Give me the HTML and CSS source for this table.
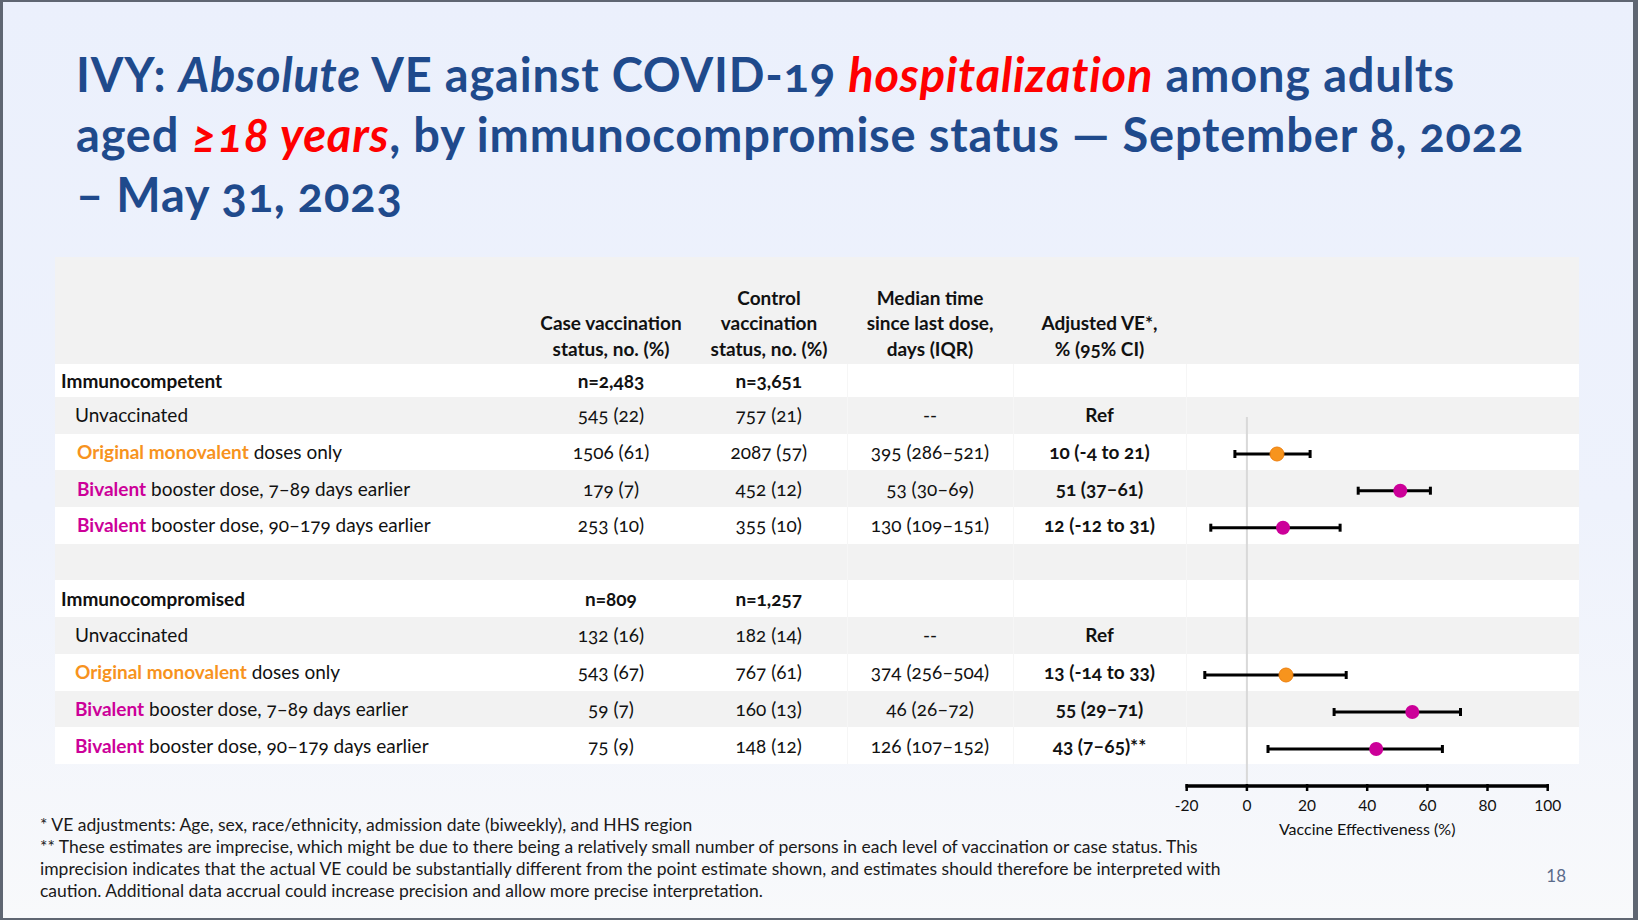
FILE: index.html
```html
<!DOCTYPE html>
<html lang="en">
<head>
<meta charset="utf-8">
<title>IVY: Absolute VE against COVID-19 hospitalization</title>
<link rel="stylesheet" href="styles.css">
</head>
<body>
<div class="slide">
  <h1 class="title">IVY: <em>Absolute</em> VE against COVID-19 <em class="hl">hospitalization</em> among adults<br>aged <em class="hl">≥18 years</em>, by immunocompromise status — September 8, 2022<br>– May 31, 2023</h1>

  <div class="table-wrap">
    <table class="ve">
      <colgroup>
        <col class="c-label"><col class="c-case"><col class="c-ctrl"><col class="c-med"><col class="c-adj"><col class="c-chart">
      </colgroup>
      <thead>
        <tr>
          <th></th>
          <th>Case vaccination<br>status, no. (%)</th>
          <th>Control<br>vaccination<br>status, no. (%)</th>
          <th>Median time<br>since last dose,<br>days (IQR)</th>
          <th>Adjusted VE*,<br>% (95% CI)</th>
          <th></th>
        </tr>
      </thead>
      <tbody>
        <tr class="group short">
          <td class="label">Immunocompetent</td><td>n=2,483</td><td>n=3,651</td><td class="sep"></td><td class="sep"></td><td class="sep"></td>
        </tr>
        <tr>
          <td class="label sub">Unvaccinated</td><td>545 (22)</td><td>757 (21)</td><td class="sep">--</td><td class="sep bold">Ref</td><td class="sep"></td>
        </tr>
        <tr>
          <td class="label sub wide"><span class="orig">Original monovalent</span> doses only</td><td>1506 (61)</td><td>2087 (57)</td><td class="sep">395 (286–521)</td><td class="sep bold">10 (-4 to 21)</td><td class="sep"></td>
        </tr>
        <tr>
          <td class="label sub wide"><span class="biv">Bivalent</span> booster dose, 7–89 days earlier</td><td>179 (7)</td><td>452 (12)</td><td class="sep">53 (30–69)</td><td class="sep bold">51 (37–61)</td><td class="sep"></td>
        </tr>
        <tr>
          <td class="label sub wide"><span class="biv">Bivalent</span> booster dose, 90–179 days earlier</td><td>253 (10)</td><td>355 (10)</td><td class="sep">130 (109–151)</td><td class="sep bold">12 (-12 to 31)</td><td class="sep"></td>
        </tr>
        <tr class="blank">
          <td></td><td></td><td></td><td class="sep"></td><td class="sep"></td><td class="sep"></td>
        </tr>
        <tr class="group">
          <td class="label">Immunocompromised</td><td>n=809</td><td>n=1,257</td><td class="sep"></td><td class="sep"></td><td class="sep"></td>
        </tr>
        <tr>
          <td class="label sub">Unvaccinated</td><td>132 (16)</td><td>182 (14)</td><td class="sep">--</td><td class="sep bold">Ref</td><td class="sep"></td>
        </tr>
        <tr>
          <td class="label sub"><span class="orig">Original monovalent</span> doses only</td><td>543 (67)</td><td>767 (61)</td><td class="sep">374 (256–504)</td><td class="sep bold">13 (-14 to 33)</td><td class="sep"></td>
        </tr>
        <tr>
          <td class="label sub"><span class="biv">Bivalent</span> booster dose, 7–89 days earlier</td><td>59 (7)</td><td>160 (13)</td><td class="sep">46 (26–72)</td><td class="sep bold">55 (29–71)</td><td class="sep"></td>
        </tr>
        <tr>
          <td class="label sub"><span class="biv">Bivalent</span> booster dose, 90–179 days earlier</td><td>75 (9)</td><td>148 (12)</td><td class="sep">126 (107–152)</td><td class="sep bold">43 (7–65)**</td><td class="sep"></td>
        </tr>
      </tbody>
    </table>

    <svg class="forest" width="430" height="450" viewBox="0 0 430 450">
      <line class="zero" x1="96.9" y1="17" x2="96.9" y2="386"/>
      <g class="ci">
        <line x1="84.9" y1="54" x2="160.1" y2="54"/><line x1="84.9" y1="50" x2="84.9" y2="58"/><line x1="160.1" y1="50" x2="160.1" y2="58"/>
        <line x1="208.2" y1="90.7" x2="280.4" y2="90.7"/><line x1="208.2" y1="86.7" x2="208.2" y2="94.7"/><line x1="280.4" y1="86.7" x2="280.4" y2="94.7"/>
        <line x1="60.8" y1="127.7" x2="190.1" y2="127.7"/><line x1="60.8" y1="123.7" x2="60.8" y2="131.7"/><line x1="190.1" y1="123.7" x2="190.1" y2="131.7"/>
        <line x1="54.8" y1="275" x2="196.2" y2="275"/><line x1="54.8" y1="271" x2="54.8" y2="279"/><line x1="196.2" y1="271" x2="196.2" y2="279"/>
        <line x1="184.1" y1="312" x2="310.5" y2="312"/><line x1="184.1" y1="308" x2="184.1" y2="316"/><line x1="310.5" y1="308" x2="310.5" y2="316"/>
        <line x1="118" y1="349" x2="292.4" y2="349"/><line x1="118" y1="345" x2="118" y2="353"/><line x1="292.4" y1="345" x2="292.4" y2="353"/>
      </g>
      <circle class="dot-orig" cx="127" cy="54" r="7"/>
      <circle class="dot-biv" cx="250.3" cy="90.7" r="7"/>
      <circle class="dot-biv" cx="133" cy="127.7" r="7"/>
      <circle class="dot-orig" cx="136" cy="275" r="7"/>
      <circle class="dot-biv" cx="262.3" cy="312" r="7"/>
      <circle class="dot-biv" cx="226.2" cy="349" r="7"/>
      <g class="axis">
        <line class="axis-line" x1="35.5" y1="386" x2="398.9" y2="386"/>
        <line x1="36.7" y1="384" x2="36.7" y2="391"/>
        <line x1="96.9" y1="384" x2="96.9" y2="391"/>
        <line x1="157.1" y1="384" x2="157.1" y2="391"/>
        <line x1="217.2" y1="384" x2="217.2" y2="391"/>
        <line x1="277.4" y1="384" x2="277.4" y2="391"/>
        <line x1="337.5" y1="384" x2="337.5" y2="391"/>
        <line x1="397.7" y1="384" x2="397.7" y2="391"/>
      </g>
      <g class="ticks">
        <text x="36.7" y="411">-20</text>
        <text x="96.9" y="411">0</text>
        <text x="157.1" y="411">20</text>
        <text x="217.2" y="411">40</text>
        <text x="277.4" y="411">60</text>
        <text x="337.5" y="411">80</text>
        <text x="397.7" y="411">100</text>
      </g>
      <text class="axis-title" x="217.2" y="435">Vaccine Effectiveness (%)</text>
    </svg>
  </div>

  <div class="footer">
    <p class="notes">* VE adjustments: Age, sex, race/ethnicity, admission date (biweekly), and HHS region<br>** These estimates are imprecise, which might be due to there being a relatively small number of persons in each level of vaccination or case status. This<br>imprecision indicates that the actual VE could be substantially different from the point estimate shown, and estimates should therefore be interpreted with<br>caution. Additional data accrual could increase precision and allow more precise interpretation.</p>
    <span class="page-num">18</span>
  </div>
</div>
</body>
</html>
```

FILE: styles.css
```css
html, body {
  margin: 0;
  padding: 0;
}

body {
  width: 1638px;
  height: 920px;
  overflow: hidden;
  font-family: Lato, "Open Sans", "Noto Sans", sans-serif;
  color: #111;
}

.slide {
  box-sizing: border-box;
  width: 1638px;
  height: 920px;
  border-style: solid;
  border-color: #5f6672;
  border-width: 2px 5px 2px 3px;
  background: linear-gradient(180deg, #ebf0fc 0%, #eef2fc 55%, #f8f9fb 100%);
  display: flex;
  flex-direction: column;
}

/* Title */
.title {
  margin: 42px 0 0 73px;
  font-size: 47px;
  line-height: 60px;
  letter-spacing: 0.8px;
  font-weight: 700;
  color: #1f4a8c;
  font-variant-numeric: oldstyle-nums;
}

.title em {
  font-style: italic;
}

.title .hl {
  color: #ff0000;
}

/* Table */
.table-wrap {
  position: relative;
  margin: 33px 0 0 52px;
  width: 1524px;
}

.ve {
  width: 1524px;
  table-layout: fixed;
  border-collapse: collapse;
  font-size: 19px;
  color: #111;
  font-variant-numeric: oldstyle-nums;
}

.c-label { width: 476px; }
.c-case { width: 160px; }
.c-ctrl { width: 156px; }
.c-med { width: 166px; }
.c-adj { width: 173px; }
.c-chart { width: 393px; }

.ve thead tr {
  height: 107px;
  background: #f2f2f2;
}

.ve th {
  padding: 0 0 3px;
  vertical-align: bottom;
  text-align: center;
  font-weight: 700;
  line-height: 25.5px;
}

.ve tbody tr {
  height: 36.7px;
}

.ve tbody tr.short {
  height: 33px;
}

.ve tbody tr:nth-child(odd) {
  background: #ffffff;
}

.ve tbody tr:nth-child(even) {
  background: #f2f2f2;
}

.ve td {
  padding: 0;
  text-align: center;
  vertical-align: middle;
  line-height: 24px;
  white-space: nowrap;
}

.ve td.sep {
  border-left: 1px solid #f6f6f6;
}

.ve td.label {
  text-align: left;
  padding-left: 20px;
}

.ve td.label.wide {
  padding-left: 22px;
}

.ve tr.group td {
  font-weight: 700;
}

.ve tr.group td.label {
  padding-left: 6px;
}

.ve td.bold {
  font-weight: 700;
}

.orig {
  color: #f7931e;
  font-weight: 700;
}

.biv {
  color: #cc0099;
  font-weight: 700;
}

/* Forest plot overlay */
.forest {
  position: absolute;
  left: 1095px;
  top: 143px;
  overflow: visible;
  font-family: Lato, "Open Sans", sans-serif;
}

.forest .zero {
  stroke: #d9d9d9;
  stroke-width: 2;
}

.forest .ci line {
  stroke: #000;
  stroke-width: 3;
}

.forest .dot-orig {
  fill: #f7941d;
  stroke: #ee7f0e;
  stroke-width: 1;
}

.forest .dot-biv {
  fill: #cc0099;
}

.forest .axis line {
  stroke: #000;
  stroke-width: 2.5;
}

.forest .axis .axis-line {
  stroke-width: 3.5;
}

.forest .ticks text {
  font-size: 15.5px;
  text-anchor: middle;
  fill: #111;
}

.forest .axis-title {
  font-size: 16px;
  text-anchor: middle;
  fill: #111;
}

/* Footer */
.footer {
  display: flex;
  justify-content: space-between;
  align-items: flex-end;
  margin: 50px 0 0 37px;
  padding-right: 67px;
}

.notes {
  margin: 0;
  font-size: 17.5px;
  line-height: 22px;
  color: #1a1a1a;
}

.page-num {
  font-size: 17px;
  line-height: 22px;
  color: #5b6b8a;
  margin-bottom: 15px;
}
```
